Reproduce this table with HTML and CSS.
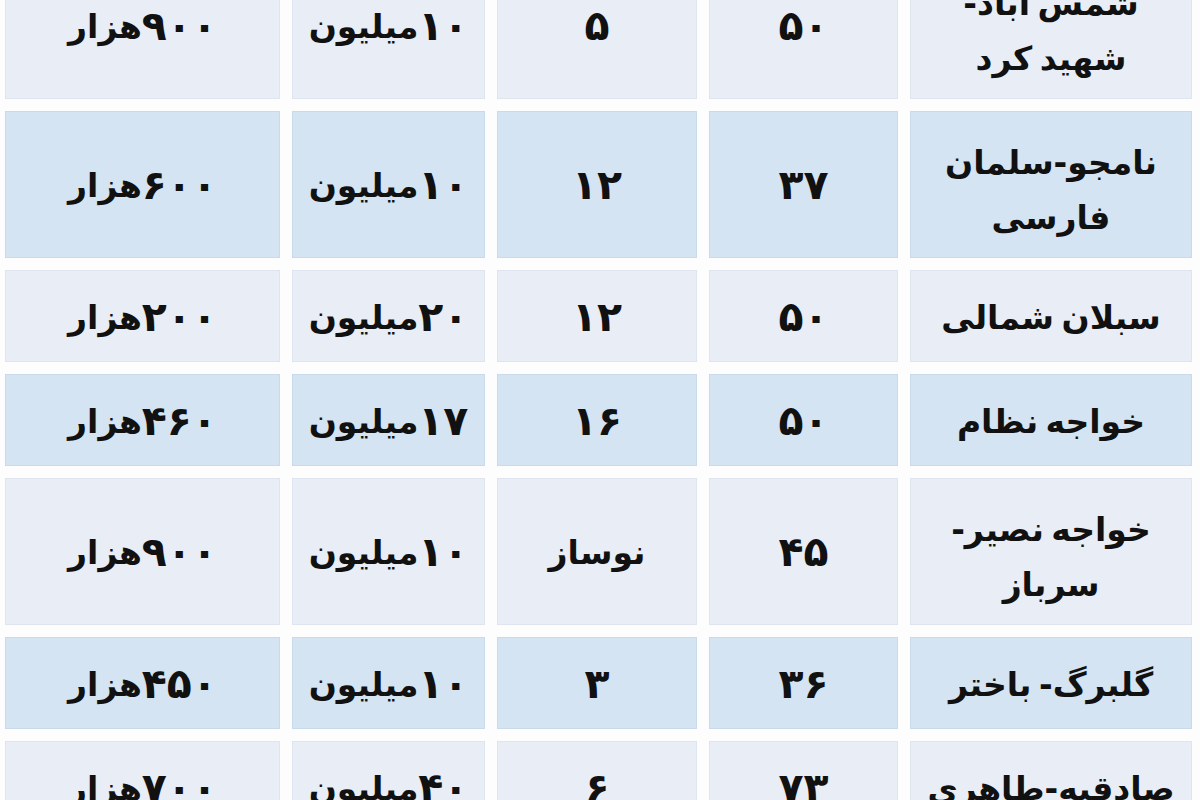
FILE: index.html
```html
<!DOCTYPE html>
<html lang="fa" dir="rtl">
<head>
<meta charset="utf-8">
<title>جدول</title>
<link rel="stylesheet" href="styles.css">
</head>
<body>
<div class="table">
  <div class="row tall light">
    <div class="cell name two">شمس آباد-<br>شهید کرد</div>
    <div class="cell"><span class="num">۵۰</span></div>
    <div class="cell"><span class="num">۵</span></div>
    <div class="cell"><span class="num">۱۰</span>میلیون</div>
    <div class="cell"><span class="num">۹۰۰</span>هزار</div>
  </div>
  <div class="row tall blue">
    <div class="cell name two">نامجو-سلمان<br>فارسی</div>
    <div class="cell"><span class="num">۳۷</span></div>
    <div class="cell"><span class="num">۱۲</span></div>
    <div class="cell"><span class="num">۱۰</span>میلیون</div>
    <div class="cell"><span class="num">۶۰۰</span>هزار</div>
  </div>
  <div class="row short light">
    <div class="cell name">سبلان شمالی</div>
    <div class="cell"><span class="num">۵۰</span></div>
    <div class="cell"><span class="num">۱۲</span></div>
    <div class="cell"><span class="num">۲۰</span>میلیون</div>
    <div class="cell"><span class="num">۲۰۰</span>هزار</div>
  </div>
  <div class="row short blue">
    <div class="cell name">خواجه نظام</div>
    <div class="cell"><span class="num">۵۰</span></div>
    <div class="cell"><span class="num">۱۶</span></div>
    <div class="cell"><span class="num">۱۷</span>میلیون</div>
    <div class="cell"><span class="num">۴۶۰</span>هزار</div>
  </div>
  <div class="row tall light">
    <div class="cell name two">خواجه نصیر-<br>سرباز</div>
    <div class="cell"><span class="num">۴۵</span></div>
    <div class="cell">نوساز</div>
    <div class="cell"><span class="num">۱۰</span>میلیون</div>
    <div class="cell"><span class="num">۹۰۰</span>هزار</div>
  </div>
  <div class="row short blue">
    <div class="cell name">گلبرگ- باختر</div>
    <div class="cell"><span class="num">۳۶</span></div>
    <div class="cell"><span class="num">۳</span></div>
    <div class="cell"><span class="num">۱۰</span>میلیون</div>
    <div class="cell"><span class="num">۴۵۰</span>هزار</div>
  </div>
  <div class="row short light">
    <div class="cell name">صادقیه-طاهری</div>
    <div class="cell"><span class="num">۷۳</span></div>
    <div class="cell"><span class="num">۶</span></div>
    <div class="cell"><span class="num">۴۰</span>میلیون</div>
    <div class="cell"><span class="num">۷۰۰</span>هزار</div>
  </div>
</div>
</body>
</html>
```

FILE: styles.css
```css
html, body {
  margin: 0;
  padding: 0;
  background: #fdfdfe;
  overflow: hidden;
}
body {
  width: 1200px;
  height: 800px;
  font-family: "DejaVu Sans", sans-serif;
  font-weight: bold;
  color: #111;
}
.table {
  direction: rtl;
  margin-top: -48px;
  padding: 0 8px 0 6px;
  display: flex;
  flex-direction: column;
  gap: 12px;
}
.row {
  display: grid;
  grid-template-columns: 282px 189px 200px 193px 275px;
  column-gap: 12px;
}
.row.tall { height: 147px; }
.row.short { height: 92px; }
.cell {
  display: flex;
  align-items: center;
  justify-content: center;
  text-align: center;
  font-size: 33px;
  line-height: 55px;
  border: 1px solid #dfe5ee;
  box-sizing: border-box;
  padding-top: 2px;
}
.num {
  font-size: 41px;
  line-height: 1;
}
.light .cell { background: #e8edf6; }
.blue .cell { background: #d4e4f2; border-color: #c9dbeb; }
.name { font-size: 33px; word-spacing: -4px; }
.name.two { padding-top: 10px; }
```
